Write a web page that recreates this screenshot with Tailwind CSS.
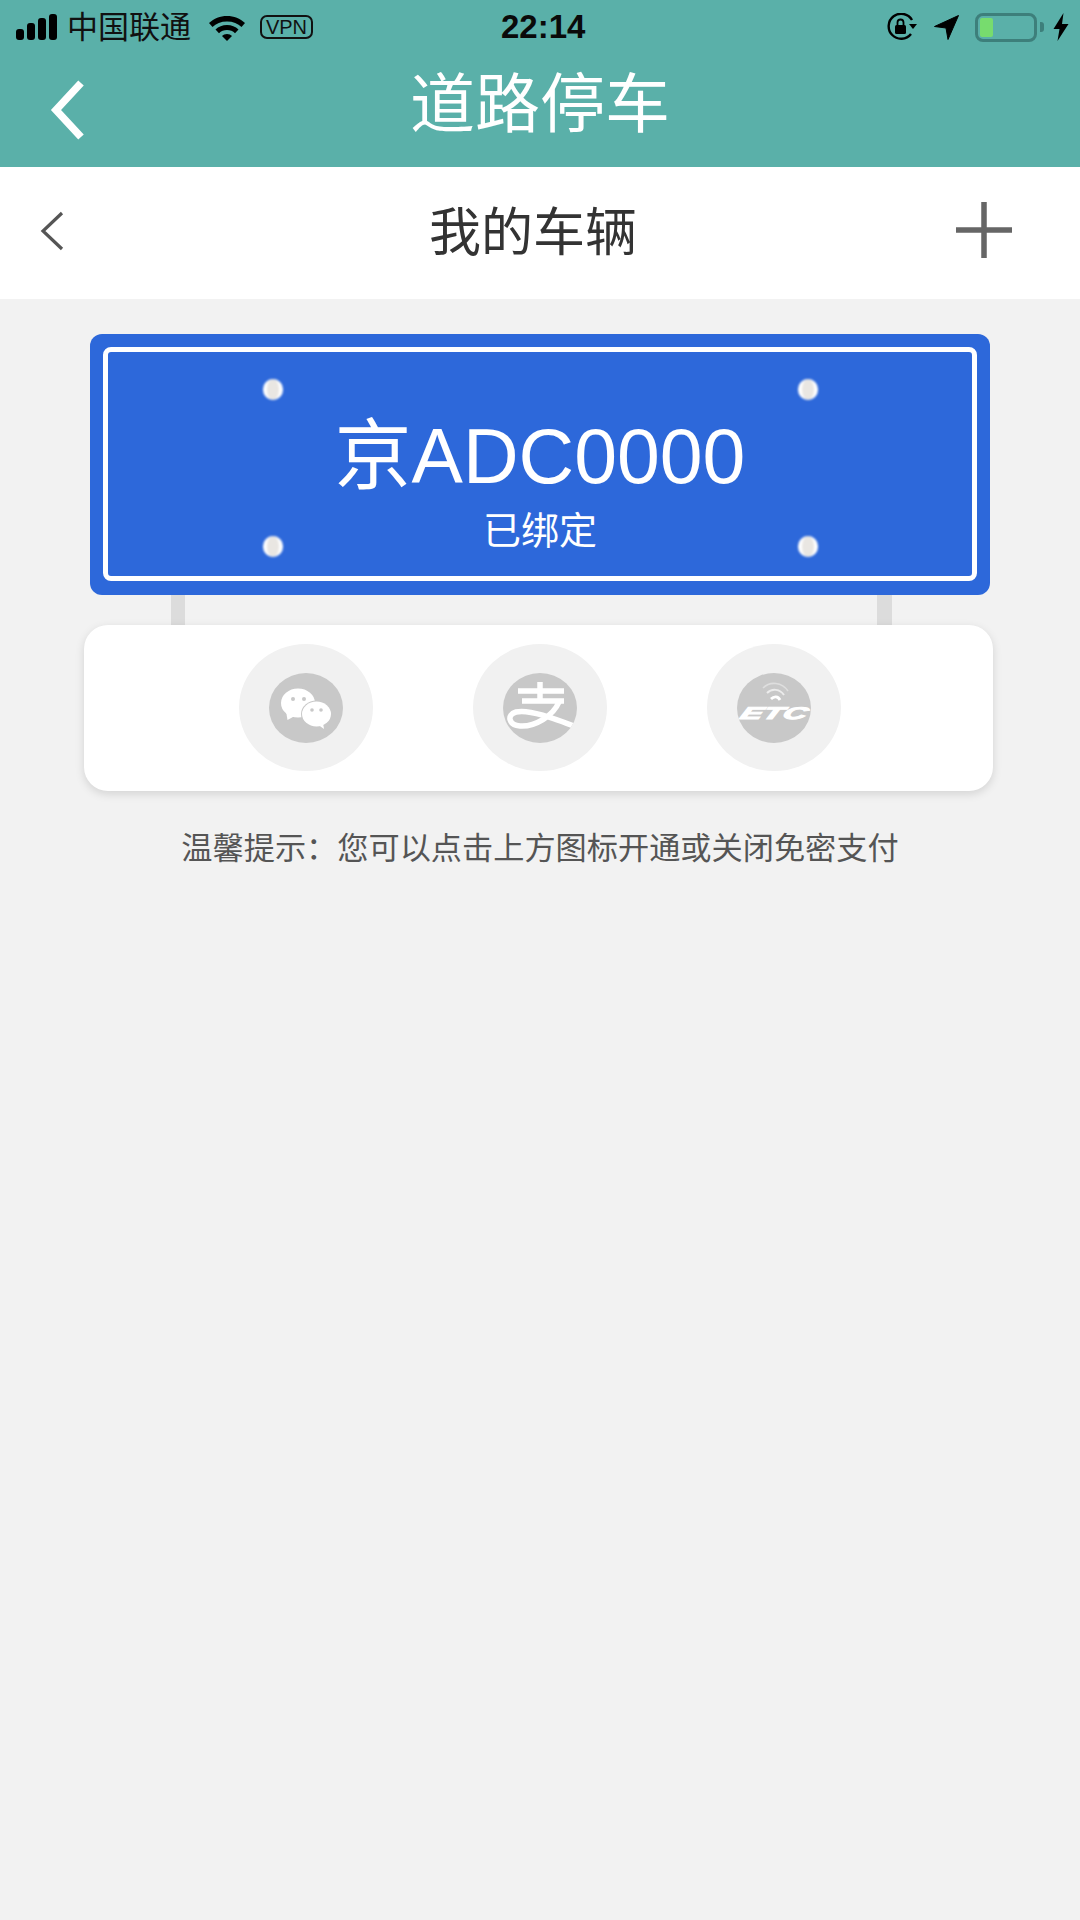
<!DOCTYPE html>
<html lang="zh-CN">
<head>
<meta charset="utf-8">
<script src="https://cdn.jsdelivr.net/npm/@tailwindcss/browser@4"></script>
<title>我的车辆</title>
</head>
<body class="m-0">
<div class="w-[1080px] h-[1920px] bg-[#f2f2f2] overflow-hidden font-['Liberation_Sans','Noto_Sans_CJK_SC',sans-serif]">
  <header class="h-[167px] bg-[#5ab0a9]">
    <div class="h-[54px] relative flex items-center justify-between text-black">
      <div class="flex items-center pl-[16px]">
        <svg width="42" height="26" viewBox="0 0 42 26" class="mr-[9px]" fill="#000"><rect x="0" y="15" width="8" height="11" rx="3"/><rect x="11" y="9" width="8" height="17" rx="3"/><rect x="22" y="4" width="8" height="22" rx="3"/><rect x="33" y="0" width="8" height="26" rx="3"/></svg>
        <span class="text-[31px] leading-[40px] text-[#111] mt-[1px]">中国联通</span>
        <svg width="38" height="28" viewBox="0 0 38 28" class="ml-[17px]" fill="#000"><path d="M19 3C12 3 6 5.500 1 10l3.500 4C8 10.500 13 8.500 19 8.500S30 10.500 33.500 14L37 10C32 5.500 26 3 19 3Z"/><path d="M19 12c-4.500 0-8.500 1.700-11.500 4.500L11 20.300c2-2 5-3.200 8-3.200s6 1.200 8 3.200l3.500-3.800C27.500 13.700 23.500 12 19 12Z"/><path d="M19 21c-2 0-3.800.8-5 2l5 5 5-5c-1.200-1.200-3-2-5-2Z"/></svg>
        <span class="ml-[14px] w-[53px] h-[24px] border-2 border-[#111] rounded-[7px] flex items-center justify-center text-[20px] leading-none text-[#111]">VPN</span>
      </div>
      <span class="absolute left-[501px] top-[9px] text-[33px] leading-[36px] font-bold text-[#0a0a0a]">22:14</span>
      <div class="flex items-center pr-[11px]">
        <svg width="31" height="28" viewBox="0 0 31 28"><path d="M24 21A12.500 12.500 0 1 1 25 7" fill="none" stroke="#000" stroke-width="2.400"/><path d="M22 11h8l-4 5Z" fill="#000"/><rect x="8" y="12" width="11" height="9" rx="1.500" fill="#000"/><path d="M10.500 12V9.500a3 3 0 0 1 6 0V12" fill="none" stroke="#000" stroke-width="1.800"/></svg>
        <svg width="25" height="25" viewBox="0 0 25 25" class="ml-[16px]" fill="#000"><path d="M24.500 0.500 0.500 11.500l11.500 1.500 2 11.500Z" stroke="#000" stroke-width="1" stroke-linejoin="round"/></svg>
        <div class="ml-[16px] w-[62px] h-[29px] border-[3px] border-[#3d7f7b] rounded-[8px] p-[2px] flex">
          <div class="w-[13px] bg-[#77dc6e] rounded-[2px]"></div>
        </div>
        <div class="ml-[3px] w-[4px] h-[10px] bg-[#3d7f7b] rounded-r-[3px]"></div>
        <svg width="16" height="28" viewBox="0 0 16 28" class="ml-[9px]" fill="#000"><path d="M10.500 0 0.500 16h6L4.500 28 15.500 11h-6.500Z"/></svg>
      </div>
    </div>
    <div class="h-[113px] grid grid-cols-[1fr_auto_1fr] items-center">
      <svg width="40" height="62" viewBox="0 0 40 62" class="ml-[49px] -mt-[2px]"><path d="M32 4 7 31l25 27" fill="none" stroke="#fff" stroke-width="7.500"/></svg>
      <h1 class="text-[65px] leading-[80px] text-white font-normal -mt-[12px]">道路停车</h1>
      <div></div>
    </div>
  </header>

  <nav class="h-[132px] bg-white grid grid-cols-[1fr_auto_1fr] items-center">
    <svg width="26" height="40" viewBox="0 0 26 40" class="ml-[39px] -mt-[5px]"><path d="M23 2 4 20l19 18" fill="none" stroke="#555" stroke-width="3.200"/></svg>
    <h2 class="text-[52px] leading-[64px] text-[#333] font-normal mr-[14px]">我的车辆</h2>
    <div class="flex justify-end pr-[68px]">
      <svg width="56" height="56" viewBox="0 0 56 56" class="-mt-[6px]"><path d="M0 28h56M28 0v56" stroke="#666" stroke-width="5.500"/></svg>
    </div>
  </nav>

  <main class="pt-[35px]">
    <section class="mx-[90px] w-[900px] h-[261px] bg-[#2d68da] rounded-[12px] pt-[13px] px-[13px] pb-[14px]">
      <div class="relative h-full border-[5px] border-white rounded-[8px] flex flex-col items-center text-white">
        <span class="absolute left-[155px] top-[27px] w-[20px] h-[21px] rounded-full bg-[#e9e6e2] border-x-[4px] border-white blur-[0.8px]"></span>
        <span class="absolute right-[154px] top-[27px] w-[20px] h-[21px] rounded-full bg-[#e9e6e2] border-x-[4px] border-white blur-[0.8px]"></span>
        <span class="absolute left-[155px] top-[184px] w-[20px] h-[21px] rounded-full bg-[#e9e6e2] border-x-[4px] border-white blur-[0.8px]"></span>
        <span class="absolute right-[154px] top-[184px] w-[20px] h-[21px] rounded-full bg-[#e9e6e2] border-x-[4px] border-white blur-[0.8px]"></span>
        <div class="text-[77px] leading-[88px] mt-[60px]">京ADC0000</div>
        <div class="text-[38px] leading-[50px] mt-[6px]">已绑定</div>
      </div>
    </section>

    <div class="h-[30px] flex pl-[171px] gap-[692px]">
      <div class="w-[14px] bg-[#dcdcdc]"></div>
      <div class="w-[15px] bg-[#dcdcdc]"></div>
    </div>

    <section class="relative ml-[84px] w-[909px] h-[166px] bg-white rounded-[24px] shadow-[0_3px_10px_rgba(0,0,0,0.13)] pt-[19px] pl-[2px] flex justify-center gap-[100px]">
      <div class="w-[134px] h-[127px] rounded-[50%] bg-[#f1f1f1] flex items-center justify-center">
        <svg width="74" height="70" viewBox="0 0 74 70">
          <ellipse cx="37" cy="35" rx="37" ry="35" fill="#c8c8c8"/>
          <ellipse cx="29" cy="30" rx="17" ry="14.500" fill="#fff"/>
          <path d="M17 38l1.500 9 9-5Z" fill="#fff"/>
          <ellipse cx="47.500" cy="41" rx="15.500" ry="13.500" fill="#c8c8c8"/>
          <ellipse cx="47.500" cy="41" rx="14.500" ry="12.500" fill="#fff"/>
          <path d="M48 51l7 5-1.500-9Z" fill="#fff"/>
          <circle cx="24" cy="26" r="2" fill="#c8c8c8"/><circle cx="35" cy="26" r="2" fill="#c8c8c8"/>
          <circle cx="43" cy="37" r="1.800" fill="#c8c8c8"/><circle cx="52" cy="37" r="1.800" fill="#c8c8c8"/>
        </svg>
      </div>
      <div class="w-[134px] h-[127px] rounded-[50%] bg-[#f1f1f1] flex items-center justify-center">
        <svg width="74" height="70" viewBox="0 0 74 70">
          <defs><clipPath id="a"><ellipse cx="37" cy="35" rx="37" ry="35"/></clipPath></defs>
          <ellipse cx="37" cy="35" rx="37" ry="35" fill="#c8c8c8"/>
          <g clip-path="url(#a)" fill="none" stroke="#fff">
            <path d="M15 18h46M19 28h42M37 9v19" stroke-width="5.500"/>
            <path d="M56 29C50 43 32 54 17 53 6 52 3 42 13 39 26 36 50 45 76 55" stroke-width="5.500"/>
          </g>
        </svg>
      </div>
      <div class="w-[134px] h-[127px] rounded-[50%] bg-[#f1f1f1] flex items-center justify-center">
        <div class="relative w-[74px] h-[70px] rounded-[50%] bg-[#c8c8c8] flex items-center justify-center overflow-hidden">
          <svg width="36" height="24" viewBox="0 0 36 24" class="absolute left-[21px] top-[8px]" fill="none"><path d="M5 7C12 0 24 1 30 10" stroke="#dedede" stroke-width="1.600"/><path d="M9 12c5-5 13-4 17 2" stroke="#ececec" stroke-width="2"/><path d="M13 18c3-3 7-3 9 1" stroke="#fff" stroke-width="2.800"/></svg>
          <span class="mt-[12px] text-[17px] leading-[20px] font-bold italic text-white scale-x-[1.95] -skew-x-12 [-webkit-text-stroke:1px_white]">ETC</span>
        </div>
      </div>
    </section>

    <p class="mt-[37px] text-center text-[31.200px] leading-[40px] text-[#555] pt-[1px]">温馨提示：您可以点击上方图标开通或关闭免密支付</p>
  </main>
</div>
</body>
</html>
